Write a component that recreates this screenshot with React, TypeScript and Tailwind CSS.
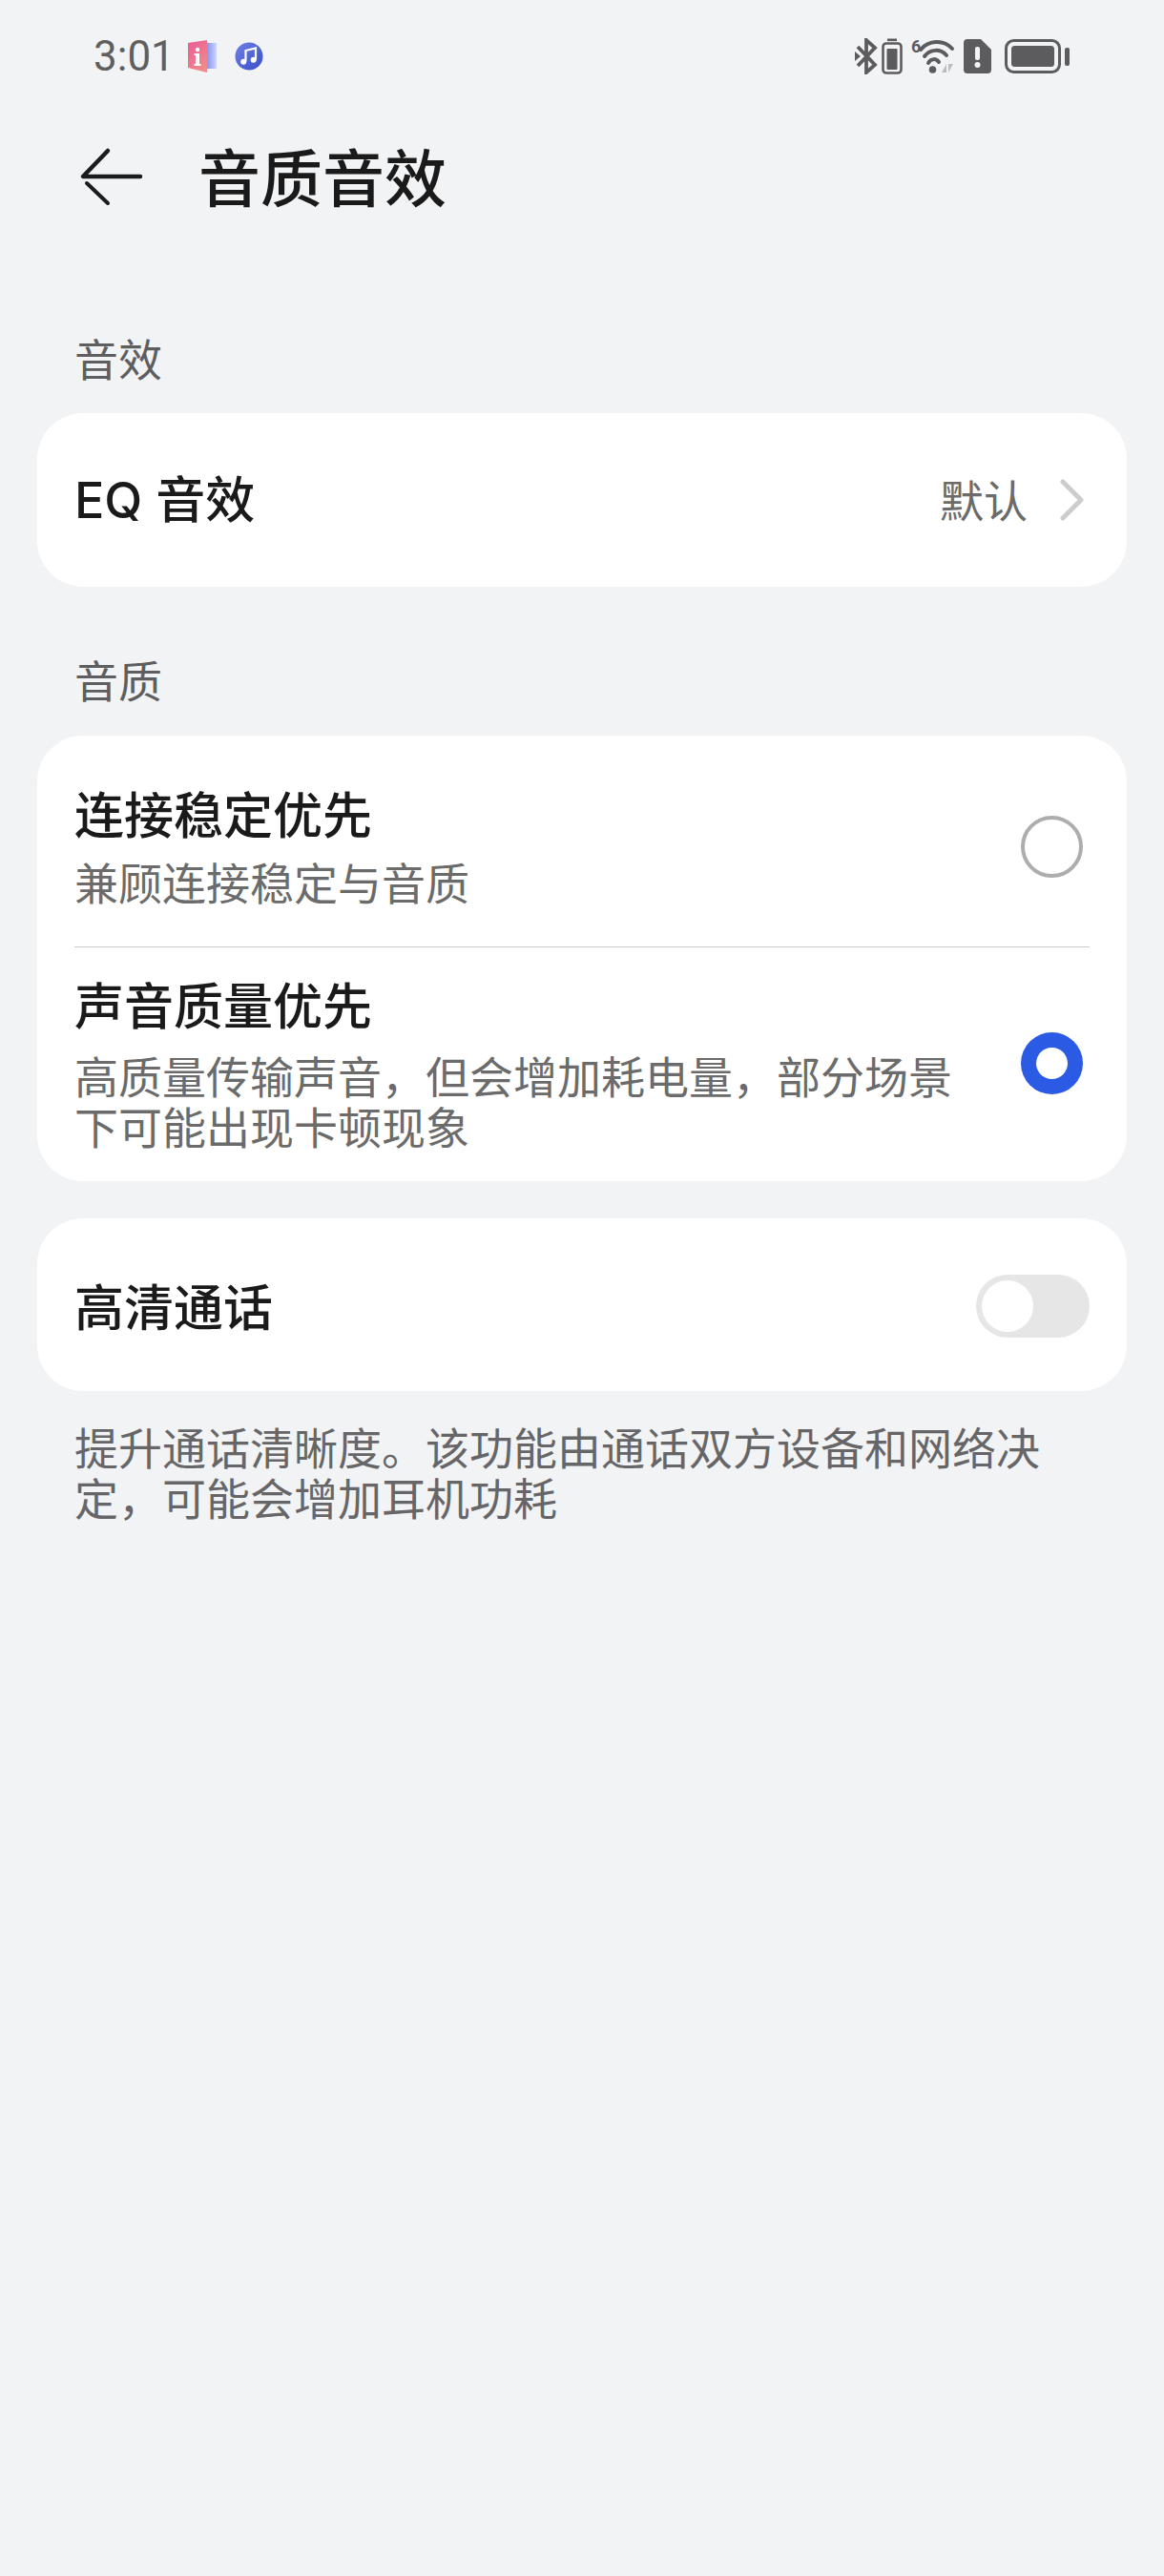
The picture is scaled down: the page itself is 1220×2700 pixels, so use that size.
const cjk = "font-['Noto_Sans_CJK_SC',sans-serif]";

function StatusBar() {
  return (
    <div className="flex h-[118px] items-center justify-between pl-[98px] pr-[97px]">
      <div className="flex items-center">
        <span className="font-['Roboto',sans-serif] text-[44px] leading-none text-[#5f5f5f]">3:01</span>
        <svg width="32" height="36" viewBox="0 0 32 36" className="ml-[13px]">
          <defs>
            <linearGradient id="pg" x1="0" y1="0" x2="0.6" y2="1">
              <stop offset="0" stopColor="#ea5a98" />
              <stop offset="1" stopColor="#f08a8c" />
            </linearGradient>
            <linearGradient id="bg" x1="0" y1="0" x2="1" y2="0">
              <stop offset="0" stopColor="#7f8df2" />
              <stop offset="1" stopColor="#cfd6fb" />
            </linearGradient>
          </defs>
          <path d="M20 4h11v27H20z" fill="url(#bg)" />
          <path d="M1 4 L21 1 V35 L1 30 Z" fill="url(#pg)" />
          <path d="M9 15 H13 V26 H14.5 V28 H7.5 V26 H9 V17 H7.5 V15 Z" fill="#fff" />
          <circle cx="11" cy="11" r="2.2" fill="#fff" />
        </svg>
        <svg width="30" height="30" viewBox="0 0 30 30" className="ml-[18px]">
          <defs>
            <linearGradient id="mg" x1="0" y1="0" x2="1" y2="1">
              <stop offset="0" stopColor="#6f80e8" />
              <stop offset="1" stopColor="#3a4ec6" />
            </linearGradient>
          </defs>
          <circle cx="15" cy="15" r="14.5" fill="url(#mg)" />
          <path d="M11.5 20.5V9L22 6.5V18.5" fill="none" stroke="#fff" strokeWidth="2.2" />
          <circle cx="9.2" cy="20.8" r="3" fill="#fff" />
          <circle cx="19.7" cy="18.8" r="3" fill="#fff" />
        </svg>
      </div>
      <div className="flex items-center">
        <svg width="24" height="38" viewBox="0 0 24 38" fill="none" stroke="#5c5c5e" strokeWidth="3.8">
          <path d="M3 9 L21 28 L12 36 V2 L21 10 L3 29" />
          <path d="M0 14 L6 19 L0 24 Z" fill="#5c5c5e" stroke="none" />
        </svg>
        <svg width="22" height="38" viewBox="0 0 22 38" className="ml-[4px]">
          <rect x="6" y="0.5" width="10" height="2.6" fill="#5c5c5e" />
          <rect x="1.5" y="5.5" width="19" height="31" rx="3.5" fill="none" stroke="#5c5c5e" strokeWidth="2.6" />
          <rect x="5.5" y="11" width="11" height="22" rx="1" fill="#5c5c5e" />
        </svg>
        <svg width="46" height="40" viewBox="0 0 46 40" className="ml-[9px] overflow-visible">
          <text x="0" y="16" fontSize="18" fontWeight="700" fill="#5c5c5e" fontFamily="Roboto, sans-serif">6</text>
          <g fill="none" stroke="#5c5c5e" strokeWidth="4" strokeLinecap="round">
            <path d="M10 13 C18 3 34 2 43 12" />
            <path d="M14 20 C20 12 31 12 37 19" />
            <path d="M18 27 C21 22 26 22 29 26" />
          </g>
          <circle cx="22.5" cy="34" r="3.8" fill="#5c5c5e" />
          <path d="M37 28 V37 H32 Z M39 28 H44 L39 37 Z" fill="#bdbdbf" />
        </svg>
        <svg width="29" height="36" viewBox="0 0 29 36" className="ml-[9px]">
          <path d="M4 0 H18 L29 11 V32 Q29 36 25 36 H4 Q0 36 0 32 V4 Q0 0 4 0 Z" fill="#5c5c5e" />
          <rect x="12" y="8" width="5" height="14" rx="2" fill="#f2f3f5" />
          <circle cx="14.5" cy="27" r="3" fill="#f2f3f5" />
        </svg>
        <svg width="70" height="36" viewBox="0 0 70 36" className="ml-[14px]">
          <rect x="1.5" y="1.5" width="56" height="33" rx="8" fill="none" stroke="#5c5c5e" strokeWidth="3" />
          <rect x="7" y="7" width="45" height="22" rx="3.5" fill="#5c5c5e" />
          <rect x="63" y="9" width="5" height="19" rx="2" fill="#5c5c5e" />
        </svg>
      </div>
    </div>
  );
}

function Label({ children, className = "" }: { children: React.ReactNode; className?: string }) {
  return <div className={`pl-[78px] text-[46px] leading-[54px] text-[#5e5e60] ${className}`}>{children}</div>;
}

function Radio({ checked }: { checked?: boolean }) {
  return checked ? (
    <div className="flex h-[65px] w-[65px] shrink-0 items-center justify-center rounded-full bg-[#2b5be4]">
      <div className="h-[33px] w-[33px] rounded-full bg-white" />
    </div>
  ) : (
    <div className="h-[65px] w-[65px] shrink-0 rounded-full border-[4px] border-[#adadad]" />
  );
}

export default function App() {
  return (
    <div className={`h-[2700px] w-[1220px] bg-[#f2f3f5] ${cjk}`}>
      <StatusBar />
      <div className="flex h-[136px] items-center">
        <svg width="70" height="64" viewBox="0 0 70 64" className="ml-[82px]" fill="none" stroke="#1c1c1c" strokeLinecap="round" strokeLinejoin="round">
          <path d="M31 4 L5 31 H65" strokeWidth="4.5" />
          <path d="M9 38 L31 59" strokeWidth="4" />
        </svg>
        <h1 className="mb-[6px] ml-[56px] text-[65px] font-medium leading-none text-[#1a1a1a]">音质音效</h1>
      </div>

      <Label className="mt-[93px]">音效</Label>
      <div className="mx-[39px] mt-[32px] flex h-[182px] items-center rounded-[48px] bg-white pl-[39px] pr-[44px]">
        <span className="mb-[3px] text-[52px] leading-none text-[#1a1a1a]">
          <span className="font-['Inter',sans-serif] font-medium">EQ</span>
          <span className="ml-[14px] font-medium">音效</span>
        </span>
        <span className="mb-[4px] ml-auto text-[46px] leading-none text-[#6b6b6b]">默认</span>
        <svg width="26" height="44" viewBox="0 0 26 44" className="ml-[34px]" fill="none" stroke="#cdcdcd" strokeWidth="5" strokeLinecap="round" strokeLinejoin="round">
          <path d="M3 3 L22 22 L3 41" />
        </svg>
      </div>

      <Label className="mt-[69px]">音质</Label>
      <div className="mx-[39px] mt-[33px] h-[467px] rounded-[48px] bg-white px-[39px]">
        <div className="flex h-[222px] items-start justify-between border-b-[1.5px] border-[#cbcbcb]">
          <div className="pt-[50px]">
            <div className="text-[52px] font-medium leading-[62px] text-[#1a1a1a]">连接稳定优先</div>
            <div className="mt-[14px] text-[46px] leading-[53px] text-[#6b6b6b]">兼顾连接稳定与音质</div>
          </div>
          <div className="mr-[7px] pt-[84px]"><Radio /></div>
        </div>
        <div className="flex items-start justify-between">
          <div className="w-[930px] pt-[28px]">
            <div className="text-[52px] font-medium leading-[62px] text-[#1a1a1a]">声音质量优先</div>
            <div className="mt-[17px] text-[46px] leading-[53px] text-[#6b6b6b]">高质量传输声音，但会增加耗电量，部分场景下可能出现卡顿现象</div>
          </div>
          <div className="mr-[7px] pt-[89px]"><Radio checked /></div>
        </div>
      </div>

      <div className="mx-[39px] mt-[39px] flex h-[181px] items-center justify-between rounded-[48px] bg-white px-[39px]">
        <span className="text-[52px] font-medium leading-none text-[#1a1a1a]">高清通话</span>
        <div className="mt-[2px] flex h-[66px] w-[119px] items-center rounded-full bg-[#e6e6e6] pl-[6px]">
          <div className="h-[54px] w-[54px] rounded-full bg-white" />
        </div>
      </div>

      <div className="px-[78px] pt-[31px] text-[46px] leading-[53px] text-[#666668]">提升通话清晰度。该功能由通话双方设备和网络决定，可能会增加耳机功耗</div>
    </div>
  );
}
